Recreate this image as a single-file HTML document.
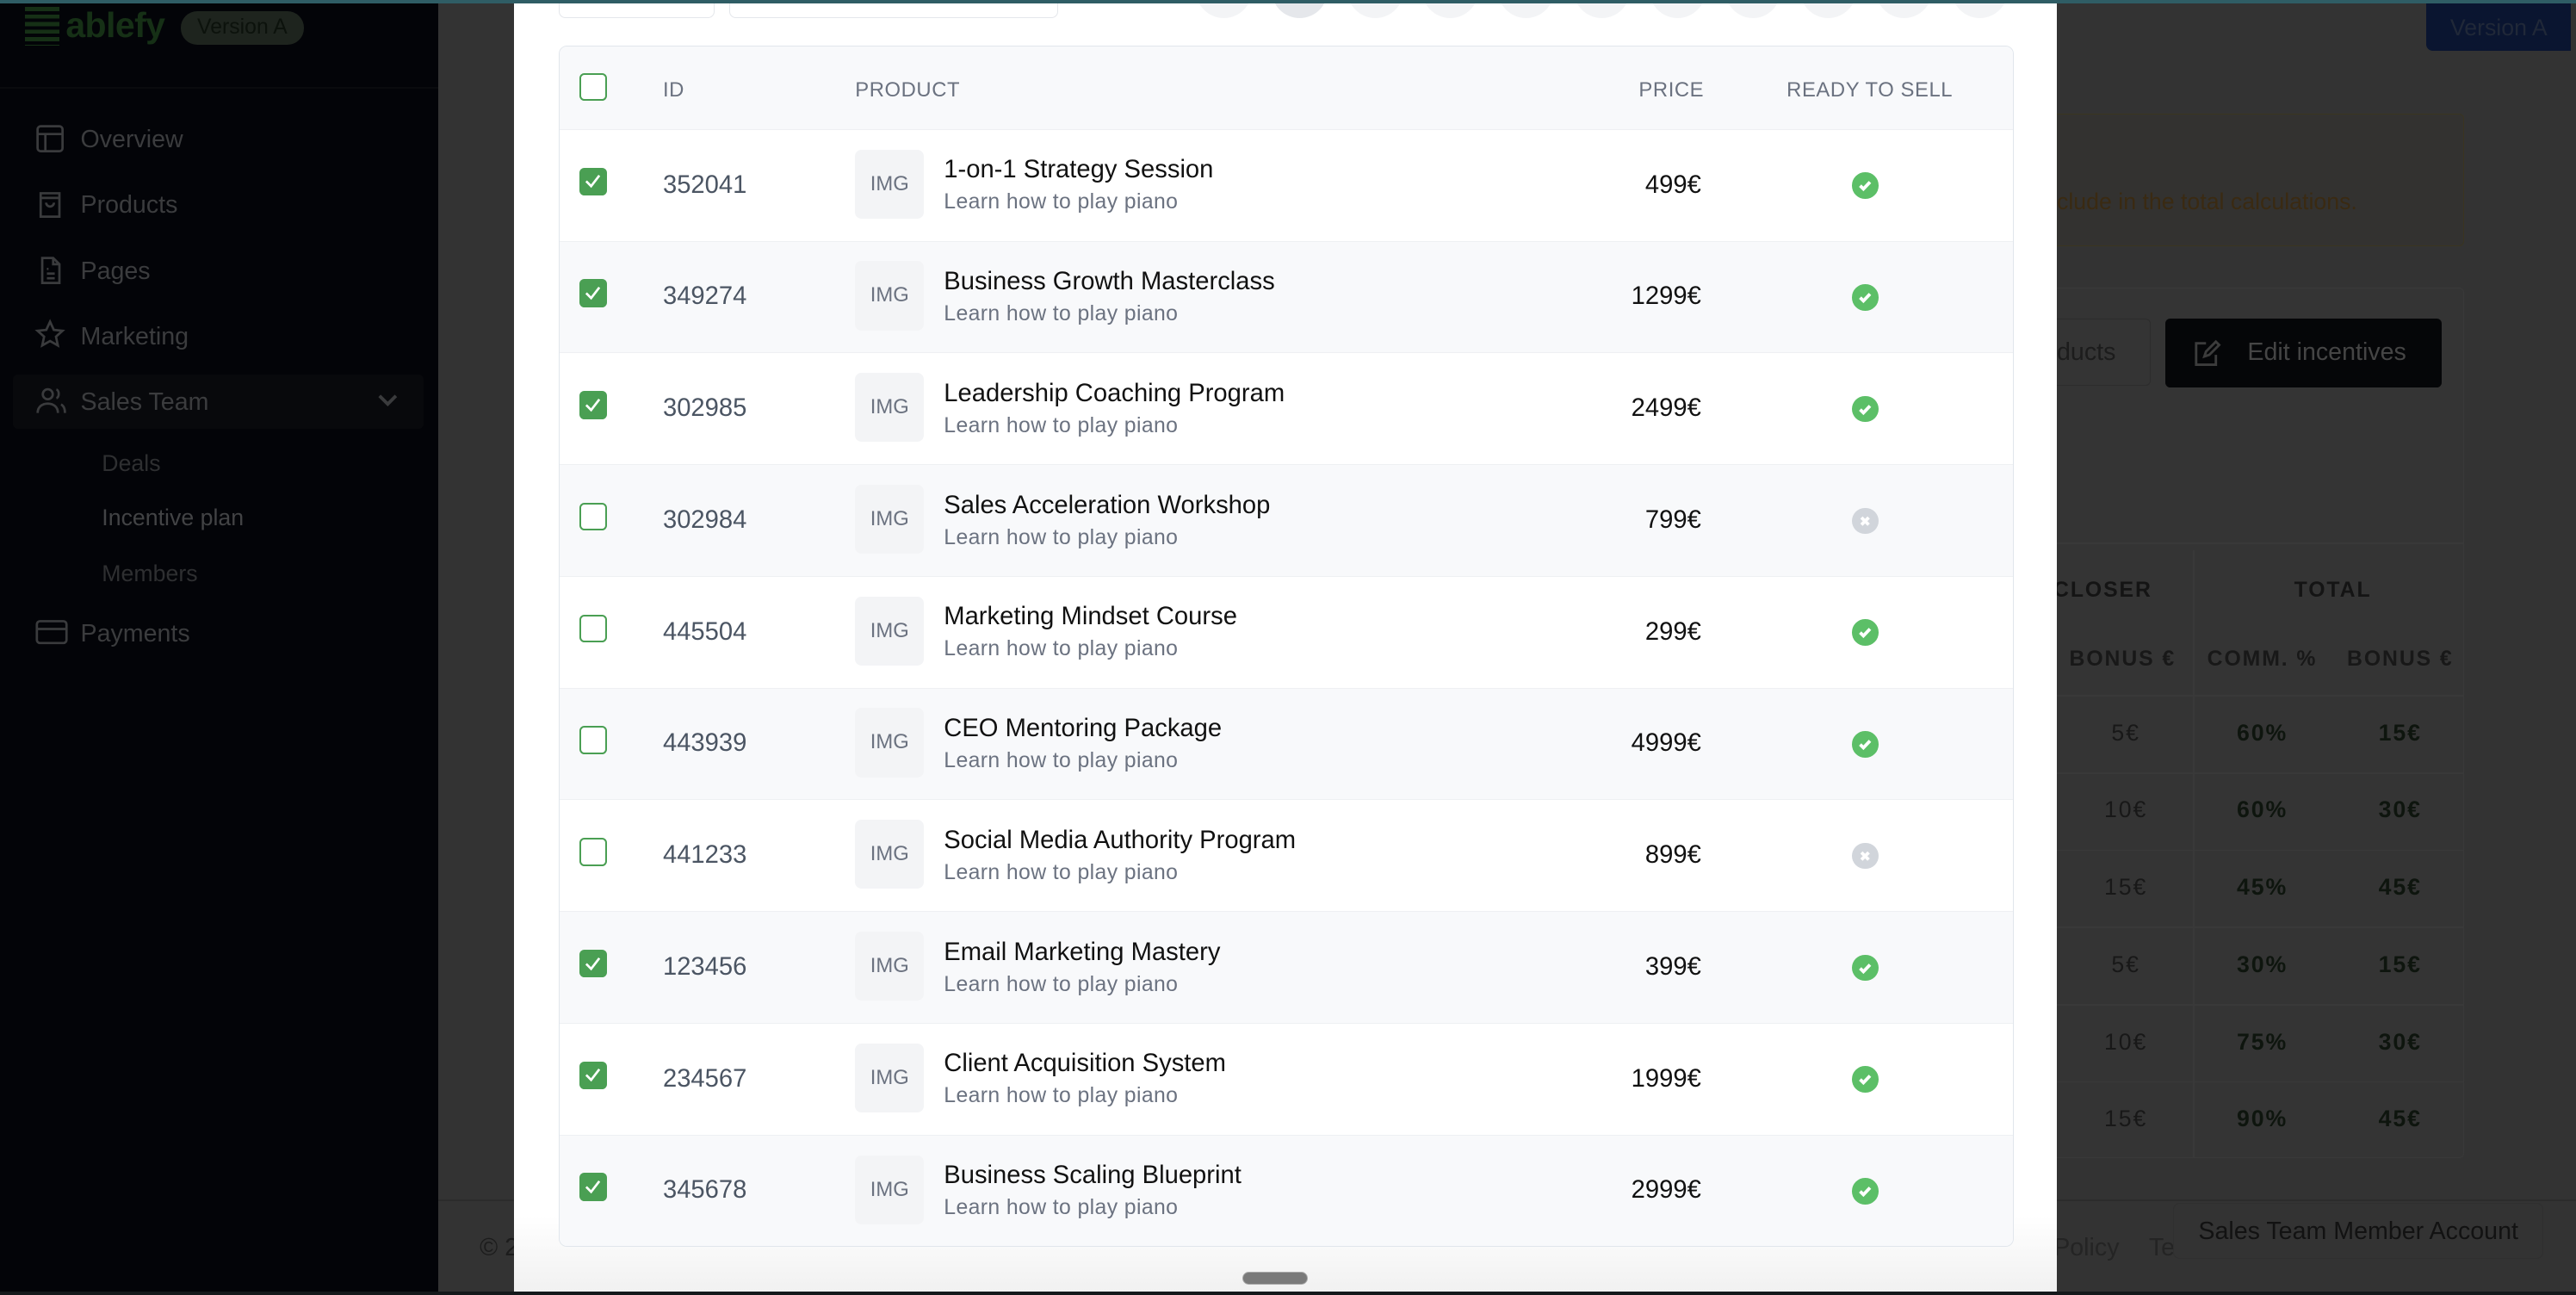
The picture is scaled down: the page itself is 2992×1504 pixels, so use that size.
<!DOCTYPE html>
<html><head><meta charset="utf-8">
<style>
*{margin:0;padding:0;box-sizing:border-box}
html,body{width:2992px;height:1504px;overflow:hidden;background:#111}
#root{zoom:1.90816;width:1568px;height:788px;position:relative;overflow:hidden;background:#333;font-family:"Liberation Sans",sans-serif}
.abs{position:absolute}
.side{left:0;top:0;width:267px;height:788px;background:#030408}
.nav{position:absolute;left:49px;font-size:15px;color:#3b3c3e;line-height:18px}
.ico{position:absolute;left:21px;width:19px;height:19px}
.sub{position:absolute;left:62px;font-size:14px;color:#2e2f31}
.modal{left:313px;top:0;width:939px;height:786px;background:linear-gradient(#fff 0,#fff 740px,#f1f1f1 786px)}
.tbl{position:absolute;left:27px;top:28px;width:886px;height:731px;border:1px solid #e1e6ec;border-radius:5px;overflow:hidden;background:#fff}
.hd{position:absolute;left:0;top:0;width:100%;height:50px;background:#f8f9fb;font-size:12.5px;color:#6b7280;letter-spacing:.3px}
.hd span{position:absolute;top:19px}
.row{position:absolute;left:0;width:100%;height:68px;border-top:1px solid #eef0f3}
.row.alt{background:#f8f9fb}
.cb{position:absolute;left:12px;top:23px;width:17px;height:17px;border-radius:3px;background:#4a9f53}
.cb.off{background:#fff;border:1.5px solid #4a9f53}
.cb svg{position:absolute;left:3px;top:3px}
.id{position:absolute;left:63px;top:25px;font-size:15.3px;color:#4b5563}
.img{position:absolute;left:180px;top:12px;width:42px;height:42px;background:#f3f4f6;border-radius:4px;font-size:12.5px;color:#6b7280;text-align:center;line-height:42px}
.nm{position:absolute;left:234px;top:16px;font-size:15.3px;color:#111}
.ds{position:absolute;left:234px;top:37px;font-size:13px;color:#6b7280;letter-spacing:.2px}
.pr{position:absolute;right:190px;top:25px;font-size:15.3px;color:#111}
.st{position:absolute;left:787px;top:26px;width:16px;height:16px;border-radius:50%;background:#5cbf67}
.st.no{background:#d1d5db}
.st svg{position:absolute;left:0;top:0}
.circ{position:absolute;top:-23px;width:34px;height:34px;border-radius:50%;background:#f3f4f6}
.dt{position:absolute;font-size:13px;color:#141414;text-align:center;letter-spacing:1px}
.dv{position:absolute;font-size:14px;color:#181818;text-align:center;letter-spacing:1px}
</style></head><body><div id="root">
<div class="abs" style="left:0;top:0;width:1568px;height:2px;background:#2f5d65;z-index:5"></div>
<div class="abs" style="left:0;top:786px;width:1568px;height:2px;background:#15191b;z-index:5"></div>

<div class="abs side">
 <div class="abs" style="left:15px;top:4px;width:21px;height:24px;background:repeating-linear-gradient(#163016 0 2.5px,transparent 2.5px 4.6px)"></div>
 <div class="abs" style="left:40px;top:3px;font-size:21.5px;font-weight:bold;color:#163016;letter-spacing:-.3px">ablefy</div>
 <div class="abs" style="left:110px;top:7px;width:75px;height:20px;border-radius:10px;background:#1e241e;color:#0c120c;font-size:13px;text-align:center;line-height:20px">Version A</div>
 <div class="abs" style="left:0;top:53px;width:267px;height:1px;background:#0a0b0e"></div>

 <svg class="ico" style="top:75px" viewBox="0 0 20 20" fill="none" stroke="#3a3b3d" stroke-width="1.5"><rect x="2" y="2" width="16" height="16" rx="2"/><path d="M2 7h16M7 7v11"/></svg>
 <div class="nav" style="top:76px">Overview</div>
 <svg class="ico" style="top:115px" viewBox="0 0 20 20" fill="none" stroke="#3a3b3d" stroke-width="1.5"><path d="M4 3h12v15H4zM4 6h12M7.5 9a2.5 2.5 0 0 0 5 0"/></svg>
 <div class="nav" style="top:116px">Products</div>
 <svg class="ico" style="top:155px" viewBox="0 0 20 20" fill="none" stroke="#3a3b3d" stroke-width="1.5"><path d="M5 2h7l4 4v12H5zM12 2v4h4M8 9h1M8 12h5M8 15h5"/></svg>
 <div class="nav" style="top:156px">Pages</div>
 <svg class="ico" style="top:194px" viewBox="0 0 20 20" fill="none" stroke="#3a3b3d" stroke-width="1.5"><path d="M10 2l2.4 5.2 5.6.6-4.2 3.8 1.2 5.6L10 14.4 5 17.2l1.2-5.6L2 7.8l5.6-.6z"/></svg>
 <div class="nav" style="top:196px">Marketing</div>
 <div class="abs" style="left:8px;top:228px;width:250px;height:33px;background:#08090c;border-radius:3px"></div>
 <svg class="ico" style="top:234px;width:21px" viewBox="0 0 21 20" fill="none" stroke="#3a3b3d" stroke-width="1.5"><circle cx="8" cy="6" r="3.2"/><path d="M1.5 18c0-4 3-6 6.5-6s6.5 2 6.5 6M13.5 3c2 .5 2 5 0 5.5M16.5 12.5c2 1 2.5 3 2.5 5.5"/></svg>
 <div class="nav" style="top:236px">Sales Team</div>
 <svg class="abs" style="left:229px;top:238px" width="14" height="12" viewBox="0 0 14 12" fill="none" stroke="#3a3b3d" stroke-width="2"><path d="M2 3l5 5 5-5"/></svg>
 <div class="sub" style="top:274px">Deals</div>
 <div class="sub" style="top:307px;color:#424345">Incentive plan</div>
 <div class="sub" style="top:341px">Members</div>
 <svg class="ico" style="top:375px;width:21px" viewBox="0 0 21 20" fill="none" stroke="#3a3b3d" stroke-width="1.5"><rect x="1" y="3" width="19" height="14" rx="2"/><path d="M1 8h19"/></svg>
 <div class="nav" style="top:377px">Payments</div>
</div>

<div class="abs" style="left:1477px;top:0;width:88px;height:31px;background:#0a1530;border-radius:0 0 0 4px;color:#202838;font-size:14px;text-align:center;line-height:34px">Version A</div>
<div class="abs" style="left:1230px;top:69px;width:270px;height:81px;border:1px solid #3a3520;border-radius:3px;background:#333230"></div>
<div class="abs" style="left:1252px;top:115px;font-size:14px;color:#3a2a12">clude in the total calculations.</div>
<div class="abs" style="left:1230px;top:175px;width:270px;height:530px;background:#343434;border:1px solid #393939;border-radius:3px"></div>
<div class="abs" style="left:1200px;top:194px;width:109px;height:41px;border:1px solid #2c2c2c;border-radius:3px"></div>
<div class="abs" style="left:1252px;top:206px;font-size:15px;color:#1c1c1c">ducts</div>
<div class="abs" style="left:1318px;top:194px;width:168px;height:42px;background:#050608;border-radius:3px"></div>
<svg class="abs" style="left:1335px;top:206px" width="17" height="18" viewBox="0 0 17 18" fill="none" stroke="#3c3c3c" stroke-width="1.5"><path d="M8 3H2v13h12v-6M7 11l1-3 6-6 2 2-6 6z"/></svg>
<div class="abs" style="left:1368px;top:206px;font-size:15px;color:#454545">Edit incentives</div>
<div class="abs" style="left:1230px;top:330px;width:270px;height:1px;background:#393939"></div>
<div class="abs" style="left:1335px;top:335px;width:1px;height:370px;background:#393939"></div>
<div class="dt" style="left:1240px;top:352px;width:80px;font-weight:bold">CLOSER</div>
<div class="dt" style="left:1380px;top:352px;width:80px;font-weight:bold">TOTAL</div>
<div class="dt" style="left:1252px;top:394px;width:80px;font-weight:bold;color:#181818">BONUS €</div>
<div class="dt" style="left:1337px;top:394px;width:80px;font-weight:bold;color:#181818">COMM. %</div>
<div class="dt" style="left:1421px;top:394px;width:80px;font-weight:bold;color:#181818">BONUS €</div>
<div class="abs" style="left:1230px;top:423px;width:270px;height:1px;background:#393939"></div>
<div class="dv" style="left:1254px;top:438px;width:80px">5€</div><div class="dv" style="left:1337px;top:438px;width:80px;font-weight:bold;color:#0e150e">60%</div><div class="dv" style="left:1421px;top:438px;width:80px;font-weight:bold;color:#0e150e">15€</div>
<div class="dv" style="left:1254px;top:485px;width:80px">10€</div><div class="dv" style="left:1337px;top:485px;width:80px;font-weight:bold;color:#0e150e">60%</div><div class="dv" style="left:1421px;top:485px;width:80px;font-weight:bold;color:#0e150e">30€</div>
<div class="dv" style="left:1254px;top:532px;width:80px">15€</div><div class="dv" style="left:1337px;top:532px;width:80px;font-weight:bold;color:#0e150e">45%</div><div class="dv" style="left:1421px;top:532px;width:80px;font-weight:bold;color:#0e150e">45€</div>
<div class="dv" style="left:1254px;top:579px;width:80px">5€</div><div class="dv" style="left:1337px;top:579px;width:80px;font-weight:bold;color:#0e150e">30%</div><div class="dv" style="left:1421px;top:579px;width:80px;font-weight:bold;color:#0e150e">15€</div>
<div class="dv" style="left:1254px;top:626px;width:80px">10€</div><div class="dv" style="left:1337px;top:626px;width:80px;font-weight:bold;color:#0e150e">75%</div><div class="dv" style="left:1421px;top:626px;width:80px;font-weight:bold;color:#0e150e">30€</div>
<div class="dv" style="left:1254px;top:673px;width:80px">15€</div><div class="dv" style="left:1337px;top:673px;width:80px;font-weight:bold;color:#0e150e">90%</div><div class="dv" style="left:1421px;top:673px;width:80px;font-weight:bold;color:#0e150e">45€</div>
<div class="abs" style="left:1230px;top:470px;width:270px;height:1px;background:#393939"></div>
<div class="abs" style="left:1230px;top:517px;width:270px;height:1px;background:#393939"></div>
<div class="abs" style="left:1230px;top:564px;width:270px;height:1px;background:#393939"></div>
<div class="abs" style="left:1230px;top:611px;width:270px;height:1px;background:#393939"></div>
<div class="abs" style="left:1230px;top:658px;width:270px;height:1px;background:#393939"></div>
<div class="abs" style="left:267px;top:730px;width:1301px;height:1px;background:#2c2c2c"></div>
<div class="abs" style="left:292px;top:751px;font-size:15px;color:#1c1c1c">© 2</div>
<div class="abs" style="left:1250px;top:751px;font-size:15px;color:#242424">Policy</div>
<div class="abs" style="left:1308px;top:751px;font-size:15px;color:#242424">Te</div>
<div class="abs" style="left:1323px;top:732px;width:225px;height:34px;background:#333;border:1px solid #2f2f2f;border-radius:4px;font-size:15px;color:#121212;text-align:center;line-height:34px">Sales Team Member Account</div>

<div class="abs modal">
 <div class="abs" style="left:27px;top:-12px;width:95px;height:23px;border:1px solid #e4e7eb;border-radius:4px"></div>
 <div class="abs" style="left:131px;top:-12px;width:200px;height:23px;border:1px solid #e4e7eb;border-radius:4px"></div>
 <div class="circ" style="left:415px"></div><div class="circ" style="left:461px;background:#e5e7eb"></div><div class="circ" style="left:507px"></div><div class="circ" style="left:553px"></div><div class="circ" style="left:599px"></div><div class="circ" style="left:645px"></div><div class="circ" style="left:691px"></div><div class="circ" style="left:737px"></div><div class="circ" style="left:783px"></div><div class="circ" style="left:829px"></div><div class="circ" style="left:875px"></div>

 <div class="tbl">
  <div class="hd">
   <div class="cb off" style="top:16px"></div>
   <span style="left:63px">ID</span><span style="left:180px">PRODUCT</span><span style="left:657px">PRICE</span><span style="left:747px">READY TO SELL</span>
  </div>
  <div class="row" style="top:50px"><div class="cb"><svg width="11" height="11" viewBox="0 0 11 11" fill="none" stroke="#fff" stroke-width="1.4"><path d="M1.5 5.5l3 3 5-6.5"/></svg></div><div class="id">352041</div><div class="img">IMG</div><div class="nm">1-on-1 Strategy Session</div><div class="ds">Learn how to play piano</div><div class="pr">499€</div><div class="st"><svg width="16" height="16" viewBox="0 0 16 16" fill="none" stroke="#fff" stroke-width="2"><path d="M5 8.2l2 2 4-4.2"/></svg></div></div>
  <div class="row alt" style="top:118px"><div class="cb"><svg width="11" height="11" viewBox="0 0 11 11" fill="none" stroke="#fff" stroke-width="1.4"><path d="M1.5 5.5l3 3 5-6.5"/></svg></div><div class="id">349274</div><div class="img">IMG</div><div class="nm">Business Growth Masterclass</div><div class="ds">Learn how to play piano</div><div class="pr">1299€</div><div class="st"><svg width="16" height="16" viewBox="0 0 16 16" fill="none" stroke="#fff" stroke-width="2"><path d="M5 8.2l2 2 4-4.2"/></svg></div></div>
  <div class="row" style="top:186px"><div class="cb"><svg width="11" height="11" viewBox="0 0 11 11" fill="none" stroke="#fff" stroke-width="1.4"><path d="M1.5 5.5l3 3 5-6.5"/></svg></div><div class="id">302985</div><div class="img">IMG</div><div class="nm">Leadership Coaching Program</div><div class="ds">Learn how to play piano</div><div class="pr">2499€</div><div class="st"><svg width="16" height="16" viewBox="0 0 16 16" fill="none" stroke="#fff" stroke-width="2"><path d="M5 8.2l2 2 4-4.2"/></svg></div></div>
  <div class="row alt" style="top:254px"><div class="cb off"></div><div class="id">302984</div><div class="img">IMG</div><div class="nm">Sales Acceleration Workshop</div><div class="ds">Learn how to play piano</div><div class="pr">799€</div><div class="st no"><svg width="16" height="16" viewBox="0 0 16 16" fill="none" stroke="#fff" stroke-width="2"><path d="M5.8 5.8l4.4 4.4M10.2 5.8l-4.4 4.4"/></svg></div></div>
  <div class="row" style="top:322px"><div class="cb off"></div><div class="id">445504</div><div class="img">IMG</div><div class="nm">Marketing Mindset Course</div><div class="ds">Learn how to play piano</div><div class="pr">299€</div><div class="st"><svg width="16" height="16" viewBox="0 0 16 16" fill="none" stroke="#fff" stroke-width="2"><path d="M5 8.2l2 2 4-4.2"/></svg></div></div>
  <div class="row alt" style="top:390px"><div class="cb off"></div><div class="id">443939</div><div class="img">IMG</div><div class="nm">CEO Mentoring Package</div><div class="ds">Learn how to play piano</div><div class="pr">4999€</div><div class="st"><svg width="16" height="16" viewBox="0 0 16 16" fill="none" stroke="#fff" stroke-width="2"><path d="M5 8.2l2 2 4-4.2"/></svg></div></div>
  <div class="row" style="top:458px"><div class="cb off"></div><div class="id">441233</div><div class="img">IMG</div><div class="nm">Social Media Authority Program</div><div class="ds">Learn how to play piano</div><div class="pr">899€</div><div class="st no"><svg width="16" height="16" viewBox="0 0 16 16" fill="none" stroke="#fff" stroke-width="2"><path d="M5.8 5.8l4.4 4.4M10.2 5.8l-4.4 4.4"/></svg></div></div>
  <div class="row alt" style="top:526px"><div class="cb"><svg width="11" height="11" viewBox="0 0 11 11" fill="none" stroke="#fff" stroke-width="1.4"><path d="M1.5 5.5l3 3 5-6.5"/></svg></div><div class="id">123456</div><div class="img">IMG</div><div class="nm">Email Marketing Mastery</div><div class="ds">Learn how to play piano</div><div class="pr">399€</div><div class="st"><svg width="16" height="16" viewBox="0 0 16 16" fill="none" stroke="#fff" stroke-width="2"><path d="M5 8.2l2 2 4-4.2"/></svg></div></div>
  <div class="row" style="top:594px"><div class="cb"><svg width="11" height="11" viewBox="0 0 11 11" fill="none" stroke="#fff" stroke-width="1.4"><path d="M1.5 5.5l3 3 5-6.5"/></svg></div><div class="id">234567</div><div class="img">IMG</div><div class="nm">Client Acquisition System</div><div class="ds">Learn how to play piano</div><div class="pr">1999€</div><div class="st"><svg width="16" height="16" viewBox="0 0 16 16" fill="none" stroke="#fff" stroke-width="2"><path d="M5 8.2l2 2 4-4.2"/></svg></div></div>
  <div class="row alt" style="top:662px"><div class="cb"><svg width="11" height="11" viewBox="0 0 11 11" fill="none" stroke="#fff" stroke-width="1.4"><path d="M1.5 5.5l3 3 5-6.5"/></svg></div><div class="id">345678</div><div class="img">IMG</div><div class="nm">Business Scaling Blueprint</div><div class="ds">Learn how to play piano</div><div class="pr">2999€</div><div class="st"><svg width="16" height="16" viewBox="0 0 16 16" fill="none" stroke="#fff" stroke-width="2"><path d="M5 8.2l2 2 4-4.2"/></svg></div></div>
 </div>
 <div class="abs" style="left:443px;top:774px;width:40px;height:8px;border-radius:4px;background:#7a7a7a;border:1px solid #aaa"></div>
</div>
</div></body></html>
